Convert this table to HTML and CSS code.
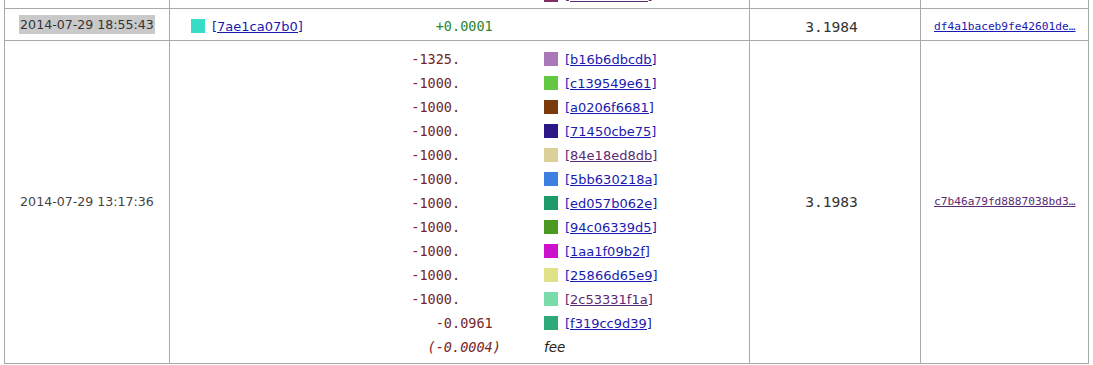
FILE: index.html
```html
<!DOCTYPE html>
<html>
<head>
<meta charset="utf-8">
<link rel="stylesheet" href="styles.css">
</head>
<body>
<table class="ledger">
  <colgroup>
    <col class="c-date"><col class="c-tx"><col class="c-bal"><col class="c-hash">
  </colgroup>
  <tr class="row prev">
    <td class="date"></td>
    <td class="tx-cell">
      <div class="tx">
        <span></span><span></span><span></span>
        <span class="addr"><i class="sq" style="background:#7d2f66"></i><a class="visited" href="#">[3f0c1d9a2b]</a></span>
      </div>
    </td>
    <td class="bal"></td>
    <td class="hash"></td>
  </tr>
  <tr class="row r1">
    <td class="date"><span class="hl">2014-07-29 18:55:43</span></td>
    <td class="tx-cell">
      <div class="tx">
        <span class="addr"><i class="sq" style="background:#36dcc6"></i><a href="#">[7ae1ca07b0]</a></span>
        <span class="int pos">+0</span><span class="frac pos">.0001</span>
        <span></span>
      </div>
    </td>
    <td class="bal">3.1984</td>
    <td class="hash"><a href="#">df4a1baceb9fe42601de…</a></td>
  </tr>
  <tr class="row r2">
    <td class="date">2014-07-29 13:17:36</td>
    <td class="tx-cell">
      <div class="tx">
        <span></span><span class="int neg">-1325</span><span class="frac neg">.</span>
        <span class="addr"><i class="sq" style="background:#a878b8"></i><a href="#">[b16b6dbcdb]</a></span>

        <span></span><span class="int neg">-1000</span><span class="frac neg">.</span>
        <span class="addr"><i class="sq" style="background:#62c842"></i><a href="#">[c139549e61]</a></span>

        <span></span><span class="int neg">-1000</span><span class="frac neg">.</span>
        <span class="addr"><i class="sq" style="background:#7b3a0c"></i><a href="#">[a0206f6681]</a></span>

        <span></span><span class="int neg">-1000</span><span class="frac neg">.</span>
        <span class="addr"><i class="sq" style="background:#2b1886"></i><a href="#">[71450cbe75]</a></span>

        <span></span><span class="int neg">-1000</span><span class="frac neg">.</span>
        <span class="addr"><i class="sq" style="background:#dccf98"></i><a class="visited" href="#">[84e18ed8db]</a></span>

        <span></span><span class="int neg">-1000</span><span class="frac neg">.</span>
        <span class="addr"><i class="sq" style="background:#3d80e2"></i><a href="#">[5bb630218a]</a></span>

        <span></span><span class="int neg">-1000</span><span class="frac neg">.</span>
        <span class="addr"><i class="sq" style="background:#1d9a6a"></i><a href="#">[ed057b062e]</a></span>

        <span></span><span class="int neg">-1000</span><span class="frac neg">.</span>
        <span class="addr"><i class="sq" style="background:#4a9a22"></i><a href="#">[94c06339d5]</a></span>

        <span></span><span class="int neg">-1000</span><span class="frac neg">.</span>
        <span class="addr"><i class="sq" style="background:#cc12cc"></i><a href="#">[1aa1f09b2f]</a></span>

        <span></span><span class="int neg">-1000</span><span class="frac neg">.</span>
        <span class="addr"><i class="sq" style="background:#e0e28a"></i><a href="#">[25866d65e9]</a></span>

        <span></span><span class="int neg">-1000</span><span class="frac neg">.</span>
        <span class="addr"><i class="sq" style="background:#7adcaa"></i><a class="visited" href="#">[2c53331f1a]</a></span>

        <span></span><span class="int neg">-0</span><span class="frac neg">.0961</span>
        <span class="addr"><i class="sq" style="background:#2eaa78"></i><a href="#">[f319cc9d39]</a></span>

        <span></span><span class="int neg fee-amt">(-0</span><span class="frac neg fee-amt">.0004)</span>
        <span class="addr fee">fee</span>
      </div>
    </td>
    <td class="bal">3.1983</td>
    <td class="hash"><a class="visited" href="#">c7b46a79fd8887038bd3…</a></td>
  </tr>
</table>
</body>
</html>
```
FILE: styles.css
```css
html, body {
  margin: 0;
  padding: 0;
  background: #fff;
  overflow: hidden;
}

body {
  font-family: "DejaVu Sans", Verdana, sans-serif;
  font-size: 13px;
  color: #222;
}

.ledger {
  border-collapse: collapse;
  table-layout: fixed;
  width: 1084px;
  margin: -23px 0 0 4px;
}

.c-date { width: 165px; }
.c-tx { width: 580px; }
.c-bal { width: 171px; }
.c-hash { width: 168px; }

.ledger td {
  border: 1px solid #a9a9a9;
  padding: 0;
  vertical-align: middle;
}

.prev td { padding: 5px 0 1px 0; }
.r1 td { padding: 5px 0 2px 0; }
.r1 td.date { padding: 3px 0 4px 0; }
.r2 td { padding: 4px 0 6px 0; }
.r2 td.tx-cell { padding-top: 6px; padding-bottom: 4px; }

.ledger td.tx-cell {
  padding-left: 21px;
}

.date {
  text-align: center;
  font-family: "DejaVu Sans", sans-serif;
  font-size: 12.6px;
  color: #444;
}

.hl {
  display: inline-block;
  background: #c9c9c9;
  color: #333;
  padding: 3px 1px;
  line-height: 13px;
}

.tx {
  display: grid;
  grid-template-columns: 160px 101px 92px auto;
  grid-auto-rows: 24px;
  align-items: center;
}

.int, .frac {
  font-family: "DejaVu Sans Mono", monospace;
  font-size: 13.5px;
  white-space: pre;
}

.int { text-align: right; }
.frac { text-align: left; }

.neg { color: #742626; }
.pos { color: #2b842b; }
.fee-amt { font-style: italic; }

.addr {
  display: flex;
  align-items: center;
  gap: 7px;
  white-space: nowrap;
}

.sq {
  display: block;
  width: 14px;
  height: 14px;
  flex: none;
}

a {
  color: #1a1ab0;
  text-decoration: underline;
}

a.visited {
  color: #5b2a72;
}

.fee {
  font-style: italic;
  color: #222;
  font-size: 13.5px;
}

.bal {
  text-align: center;
  padding-right: 7px !important;
  font-family: "DejaVu Sans Mono", monospace;
  font-size: 14.6px;
  color: #333;
}

.hash {
  padding-left: 13px !important;
  font-family: "DejaVu Sans Mono", monospace;
  font-size: 11.2px;
  white-space: nowrap;
  overflow: hidden;
}
```
